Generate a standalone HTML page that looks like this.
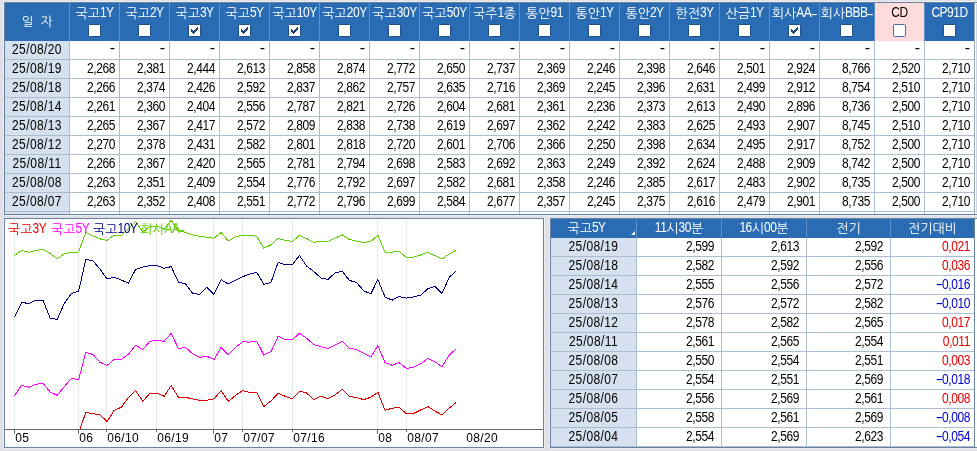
<!DOCTYPE html>
<html lang="ko"><head><meta charset="utf-8"><title>금리</title>
<style>
html,body{margin:0;padding:0}
body{width:977px;height:451px;overflow:hidden;position:relative;background:#dfe1e6;font-family:"Liberation Sans","NanumGothic",sans-serif;font-size:12px;color:#000}
div,span{position:absolute;box-sizing:border-box;white-space:nowrap}
span.i{position:static}
.pnl{background:#fff;border:1px solid #69829f;box-shadow:0 0 0 1px #eceef1;overflow:hidden}
.pnl.lo{box-shadow:1px 0 0 #eceef1,-1px 0 0 #eceef1,0 1px 0 #eceef1}
.hd{background:#2a6cb4}
.c1{background:#d5e1ee}
.vl{width:1px;background:#a9bdd3}
.hl{height:1px;background:#a9bdd3}
.vh{width:1px;background:#5e90c9}
.n{height:18px;line-height:17px;text-align:right;letter-spacing:-0.4px;font-size:12px;transform-origin:50% 12.7px;transform:translateY(1.4px) scaleY(1.15)}
.d{height:18px;line-height:17px;text-align:center;letter-spacing:0.4px;font-size:12px;transform-origin:50% 12.7px;transform:translateY(1.4px) scaleY(1.15)}
.h{color:#fff;text-align:center;height:16px;line-height:16px}
.k{font-size:13px;letter-spacing:0px}
.l{font-size:12px;letter-spacing:-0.5px;display:inline-block;transform-origin:50% 78%;transform:translateY(-0.8px) scaleY(1.19)}
.hy{display:inline-block;width:6px;text-align:center;transform:scaleX(1.8);font-size:12px}
.cb{width:13px;height:13px;background:#fff;border:1px solid #1d4f87;border-radius:1.5px}
.lg{height:16px;line-height:16px}
.ax{height:14px;line-height:14px;letter-spacing:0.35px;font-size:12px;transform-origin:0 11px;transform:scaleY(1.1)}
svg{position:absolute;left:0;top:0}

</style></head><body><div id="root" style="left:0;top:0;width:977px;height:451px;will-change:transform">
<div class="pnl" style="left:4px;top:2px;width:990px;height:213px"></div>
<div class="hd" style="left:5px;top:3px;width:969px;height:38px"></div>
<div style="left:875px;top:3px;width:49px;height:38px;background:#ffdcdc"></div>
<div class="c1" style="left:5px;top:41px;width:64px;height:173px"></div>
<div class="vh" style="left:69px;top:3px;height:38px"></div>
<div class="vh" style="left:119px;top:3px;height:38px"></div>
<div class="vh" style="left:169px;top:3px;height:38px"></div>
<div class="vh" style="left:219px;top:3px;height:38px"></div>
<div class="vh" style="left:269px;top:3px;height:38px"></div>
<div class="vh" style="left:319px;top:3px;height:38px"></div>
<div class="vh" style="left:369px;top:3px;height:38px"></div>
<div class="vh" style="left:419px;top:3px;height:38px"></div>
<div class="vh" style="left:469px;top:3px;height:38px"></div>
<div class="vh" style="left:519px;top:3px;height:38px"></div>
<div class="vh" style="left:569px;top:3px;height:38px"></div>
<div class="vh" style="left:619px;top:3px;height:38px"></div>
<div class="vh" style="left:669px;top:3px;height:38px"></div>
<div class="vh" style="left:719px;top:3px;height:38px"></div>
<div class="vh" style="left:769px;top:3px;height:38px"></div>
<div class="vh" style="left:819px;top:3px;height:38px"></div>
<div class="vh" style="left:874px;top:3px;height:38px"></div>
<div class="vh" style="left:924px;top:3px;height:38px"></div>
<div class="vl" style="left:69px;top:41px;height:173px"></div>
<div class="vl" style="left:119px;top:41px;height:173px"></div>
<div class="vl" style="left:169px;top:41px;height:173px"></div>
<div class="vl" style="left:219px;top:41px;height:173px"></div>
<div class="vl" style="left:269px;top:41px;height:173px"></div>
<div class="vl" style="left:319px;top:41px;height:173px"></div>
<div class="vl" style="left:369px;top:41px;height:173px"></div>
<div class="vl" style="left:419px;top:41px;height:173px"></div>
<div class="vl" style="left:469px;top:41px;height:173px"></div>
<div class="vl" style="left:519px;top:41px;height:173px"></div>
<div class="vl" style="left:569px;top:41px;height:173px"></div>
<div class="vl" style="left:619px;top:41px;height:173px"></div>
<div class="vl" style="left:669px;top:41px;height:173px"></div>
<div class="vl" style="left:719px;top:41px;height:173px"></div>
<div class="vl" style="left:769px;top:41px;height:173px"></div>
<div class="vl" style="left:819px;top:41px;height:173px"></div>
<div class="vl" style="left:874px;top:41px;height:173px"></div>
<div class="vl" style="left:924px;top:41px;height:173px"></div>
<div style="left:974px;top:3px;width:1px;height:211px;background:#9aa6b6"></div>
<div style="left:975px;top:3px;width:2px;height:211px;background:#fff"></div>
<div style="left:976px;top:4px;width:1px;height:209px;background:#ccd5e2"></div>
<div class="hl" style="left:5px;top:59px;width:969px"></div>
<div class="hl" style="left:5px;top:78px;width:969px"></div>
<div class="hl" style="left:5px;top:97px;width:969px"></div>
<div class="hl" style="left:5px;top:116px;width:969px"></div>
<div class="hl" style="left:5px;top:135px;width:969px"></div>
<div class="hl" style="left:5px;top:154px;width:969px"></div>
<div class="hl" style="left:5px;top:173px;width:969px"></div>
<div class="hl" style="left:5px;top:192px;width:969px"></div>
<div class="hl" style="left:5px;top:211px;width:969px"></div>
<div class="h" style="left:5px;top:13.5px;width:64px;word-spacing:3.5px"><span class="i k" style="font-size:12.5px">일 자</span></div>
<div class="h" style="left:67px;top:5.5px;width:55px;color:#fff"><span class="i k">국고</span><span class="i l">1Y</span></div>
<div class="cb" style="left:88px;top:24px;border-color:#1d4f87"></div>
<div class="h" style="left:117px;top:5.5px;width:55px;color:#fff"><span class="i k">국고</span><span class="i l">2Y</span></div>
<div class="cb" style="left:138px;top:24px;border-color:#1d4f87"></div>
<div class="h" style="left:167px;top:5.5px;width:55px;color:#fff"><span class="i k">국고</span><span class="i l">3Y</span></div>
<div class="cb" style="left:188px;top:24px;border-color:#1d4f87"></div>
<svg style="left:188px;top:24px" width="13" height="13" viewBox="0 0 13 13" shape-rendering="crispEdges"><path d="M3 5h1v3h-1zM4 6h1v3h-1zM5 7h1v3h-1zM6 6h1v3h-1zM7 5h1v3h-1zM8 4h1v3h-1zM9 3h1v3h-1z" fill="#1b4278"/></svg>
<div class="h" style="left:217px;top:5.5px;width:55px;color:#fff"><span class="i k">국고</span><span class="i l">5Y</span></div>
<div class="cb" style="left:238px;top:24px;border-color:#1d4f87"></div>
<svg style="left:238px;top:24px" width="13" height="13" viewBox="0 0 13 13" shape-rendering="crispEdges"><path d="M3 5h1v3h-1zM4 6h1v3h-1zM5 7h1v3h-1zM6 6h1v3h-1zM7 5h1v3h-1zM8 4h1v3h-1zM9 3h1v3h-1z" fill="#1b4278"/></svg>
<div class="h" style="left:267px;top:5.5px;width:55px;color:#fff"><span class="i k">국고</span><span class="i l">10Y</span></div>
<div class="cb" style="left:288px;top:24px;border-color:#1d4f87"></div>
<svg style="left:288px;top:24px" width="13" height="13" viewBox="0 0 13 13" shape-rendering="crispEdges"><path d="M3 5h1v3h-1zM4 6h1v3h-1zM5 7h1v3h-1zM6 6h1v3h-1zM7 5h1v3h-1zM8 4h1v3h-1zM9 3h1v3h-1z" fill="#1b4278"/></svg>
<div class="h" style="left:317px;top:5.5px;width:55px;color:#fff"><span class="i k">국고</span><span class="i l">20Y</span></div>
<div class="cb" style="left:338px;top:24px;border-color:#1d4f87"></div>
<div class="h" style="left:367px;top:5.5px;width:55px;color:#fff"><span class="i k">국고</span><span class="i l">30Y</span></div>
<div class="cb" style="left:388px;top:24px;border-color:#1d4f87"></div>
<div class="h" style="left:417px;top:5.5px;width:55px;color:#fff"><span class="i k">국고</span><span class="i l">50Y</span></div>
<div class="cb" style="left:438px;top:24px;border-color:#1d4f87"></div>
<div class="h" style="left:467px;top:5.5px;width:55px;color:#fff"><span class="i k">국주</span><span class="i l">1</span><span class="i k">종</span></div>
<div class="cb" style="left:488px;top:24px;border-color:#1d4f87"></div>
<div class="h" style="left:517px;top:5.5px;width:55px;color:#fff"><span class="i k">통안</span><span class="i l">91</span></div>
<div class="cb" style="left:538px;top:24px;border-color:#1d4f87"></div>
<div class="h" style="left:567px;top:5.5px;width:55px;color:#fff"><span class="i k">통안</span><span class="i l">1Y</span></div>
<div class="cb" style="left:588px;top:24px;border-color:#1d4f87"></div>
<div class="h" style="left:617px;top:5.5px;width:55px;color:#fff"><span class="i k">통안</span><span class="i l">2Y</span></div>
<div class="cb" style="left:638px;top:24px;border-color:#1d4f87"></div>
<div class="h" style="left:667px;top:5.5px;width:55px;color:#fff"><span class="i k">한전</span><span class="i l">3Y</span></div>
<div class="cb" style="left:688px;top:24px;border-color:#1d4f87"></div>
<div class="h" style="left:717px;top:5.5px;width:55px;color:#fff"><span class="i k">산금</span><span class="i l">1Y</span></div>
<div class="cb" style="left:738px;top:24px;border-color:#1d4f87"></div>
<div class="h" style="left:767px;top:5.5px;width:55px;color:#fff"><span class="i k">회사</span><span class="i l">AA</span><span class="i hy">-</span></div>
<div class="cb" style="left:788px;top:24px;border-color:#1d4f87"></div>
<svg style="left:788px;top:24px" width="13" height="13" viewBox="0 0 13 13" shape-rendering="crispEdges"><path d="M3 5h1v3h-1zM4 6h1v3h-1zM5 7h1v3h-1zM6 6h1v3h-1zM7 5h1v3h-1zM8 4h1v3h-1zM9 3h1v3h-1z" fill="#1b4278"/></svg>
<div class="h" style="left:817px;top:5.5px;width:60px;color:#fff"><span class="i k">회사</span><span class="i l">BBB</span><span class="i hy">-</span></div>
<div class="cb" style="left:840px;top:24px;border-color:#1d4f87"></div>
<div class="h" style="left:872px;top:5.5px;width:55px;color:#000"><span class="i l">CD</span></div>
<div class="cb" style="left:893px;top:24px;border-color:#3d6ea8"></div>
<div class="h" style="left:922px;top:5.5px;width:55px;color:#fff"><span class="i l">CP91D</span></div>
<div class="cb" style="left:943px;top:24px;border-color:#1d4f87"></div>
<div class="d" style="left:5px;top:41px;width:64px">25/08/20</div>
<div class="n" style="left:70px;top:41px;width:45px;letter-spacing:0;font-size:16px;line-height:14.8px;transform:none">-</div>
<div class="n" style="left:120px;top:41px;width:45px;letter-spacing:0;font-size:16px;line-height:14.8px;transform:none">-</div>
<div class="n" style="left:170px;top:41px;width:45px;letter-spacing:0;font-size:16px;line-height:14.8px;transform:none">-</div>
<div class="n" style="left:220px;top:41px;width:45px;letter-spacing:0;font-size:16px;line-height:14.8px;transform:none">-</div>
<div class="n" style="left:270px;top:41px;width:45px;letter-spacing:0;font-size:16px;line-height:14.8px;transform:none">-</div>
<div class="n" style="left:320px;top:41px;width:45px;letter-spacing:0;font-size:16px;line-height:14.8px;transform:none">-</div>
<div class="n" style="left:370px;top:41px;width:45px;letter-spacing:0;font-size:16px;line-height:14.8px;transform:none">-</div>
<div class="n" style="left:420px;top:41px;width:45px;letter-spacing:0;font-size:16px;line-height:14.8px;transform:none">-</div>
<div class="n" style="left:470px;top:41px;width:45px;letter-spacing:0;font-size:16px;line-height:14.8px;transform:none">-</div>
<div class="n" style="left:520px;top:41px;width:45px;letter-spacing:0;font-size:16px;line-height:14.8px;transform:none">-</div>
<div class="n" style="left:570px;top:41px;width:45px;letter-spacing:0;font-size:16px;line-height:14.8px;transform:none">-</div>
<div class="n" style="left:620px;top:41px;width:45px;letter-spacing:0;font-size:16px;line-height:14.8px;transform:none">-</div>
<div class="n" style="left:670px;top:41px;width:45px;letter-spacing:0;font-size:16px;line-height:14.8px;transform:none">-</div>
<div class="n" style="left:720px;top:41px;width:45px;letter-spacing:0;font-size:16px;line-height:14.8px;transform:none">-</div>
<div class="n" style="left:770px;top:41px;width:45px;letter-spacing:0;font-size:16px;line-height:14.8px;transform:none">-</div>
<div class="n" style="left:820px;top:41px;width:50px;letter-spacing:0;font-size:16px;line-height:14.8px;transform:none">-</div>
<div class="n" style="left:875px;top:41px;width:45px;letter-spacing:0;font-size:16px;line-height:14.8px;transform:none">-</div>
<div class="n" style="left:925px;top:41px;width:45px;letter-spacing:0;font-size:16px;line-height:14.8px;transform:none">-</div>
<div class="d" style="left:5px;top:60px;width:64px">25/08/19</div>
<div class="n" style="left:70px;top:60px;width:45px">2,268</div>
<div class="n" style="left:120px;top:60px;width:45px">2,381</div>
<div class="n" style="left:170px;top:60px;width:45px">2,444</div>
<div class="n" style="left:220px;top:60px;width:45px">2,613</div>
<div class="n" style="left:270px;top:60px;width:45px">2,858</div>
<div class="n" style="left:320px;top:60px;width:45px">2,874</div>
<div class="n" style="left:370px;top:60px;width:45px">2,772</div>
<div class="n" style="left:420px;top:60px;width:45px">2,650</div>
<div class="n" style="left:470px;top:60px;width:45px">2,737</div>
<div class="n" style="left:520px;top:60px;width:45px">2,369</div>
<div class="n" style="left:570px;top:60px;width:45px">2,246</div>
<div class="n" style="left:620px;top:60px;width:45px">2,398</div>
<div class="n" style="left:670px;top:60px;width:45px">2,646</div>
<div class="n" style="left:720px;top:60px;width:45px">2,501</div>
<div class="n" style="left:770px;top:60px;width:45px">2,924</div>
<div class="n" style="left:820px;top:60px;width:50px">8,766</div>
<div class="n" style="left:875px;top:60px;width:45px">2,520</div>
<div class="n" style="left:925px;top:60px;width:45px">2,710</div>
<div class="d" style="left:5px;top:79px;width:64px">25/08/18</div>
<div class="n" style="left:70px;top:79px;width:45px">2,266</div>
<div class="n" style="left:120px;top:79px;width:45px">2,374</div>
<div class="n" style="left:170px;top:79px;width:45px">2,426</div>
<div class="n" style="left:220px;top:79px;width:45px">2,592</div>
<div class="n" style="left:270px;top:79px;width:45px">2,837</div>
<div class="n" style="left:320px;top:79px;width:45px">2,862</div>
<div class="n" style="left:370px;top:79px;width:45px">2,757</div>
<div class="n" style="left:420px;top:79px;width:45px">2,635</div>
<div class="n" style="left:470px;top:79px;width:45px">2,716</div>
<div class="n" style="left:520px;top:79px;width:45px">2,369</div>
<div class="n" style="left:570px;top:79px;width:45px">2,245</div>
<div class="n" style="left:620px;top:79px;width:45px">2,396</div>
<div class="n" style="left:670px;top:79px;width:45px">2,631</div>
<div class="n" style="left:720px;top:79px;width:45px">2,499</div>
<div class="n" style="left:770px;top:79px;width:45px">2,912</div>
<div class="n" style="left:820px;top:79px;width:50px">8,754</div>
<div class="n" style="left:875px;top:79px;width:45px">2,510</div>
<div class="n" style="left:925px;top:79px;width:45px">2,710</div>
<div class="d" style="left:5px;top:98px;width:64px">25/08/14</div>
<div class="n" style="left:70px;top:98px;width:45px">2,261</div>
<div class="n" style="left:120px;top:98px;width:45px">2,360</div>
<div class="n" style="left:170px;top:98px;width:45px">2,404</div>
<div class="n" style="left:220px;top:98px;width:45px">2,556</div>
<div class="n" style="left:270px;top:98px;width:45px">2,787</div>
<div class="n" style="left:320px;top:98px;width:45px">2,821</div>
<div class="n" style="left:370px;top:98px;width:45px">2,726</div>
<div class="n" style="left:420px;top:98px;width:45px">2,604</div>
<div class="n" style="left:470px;top:98px;width:45px">2,681</div>
<div class="n" style="left:520px;top:98px;width:45px">2,361</div>
<div class="n" style="left:570px;top:98px;width:45px">2,236</div>
<div class="n" style="left:620px;top:98px;width:45px">2,373</div>
<div class="n" style="left:670px;top:98px;width:45px">2,613</div>
<div class="n" style="left:720px;top:98px;width:45px">2,490</div>
<div class="n" style="left:770px;top:98px;width:45px">2,896</div>
<div class="n" style="left:820px;top:98px;width:50px">8,736</div>
<div class="n" style="left:875px;top:98px;width:45px">2,500</div>
<div class="n" style="left:925px;top:98px;width:45px">2,710</div>
<div class="d" style="left:5px;top:117px;width:64px">25/08/13</div>
<div class="n" style="left:70px;top:117px;width:45px">2,265</div>
<div class="n" style="left:120px;top:117px;width:45px">2,367</div>
<div class="n" style="left:170px;top:117px;width:45px">2,417</div>
<div class="n" style="left:220px;top:117px;width:45px">2,572</div>
<div class="n" style="left:270px;top:117px;width:45px">2,809</div>
<div class="n" style="left:320px;top:117px;width:45px">2,838</div>
<div class="n" style="left:370px;top:117px;width:45px">2,738</div>
<div class="n" style="left:420px;top:117px;width:45px">2,619</div>
<div class="n" style="left:470px;top:117px;width:45px">2,697</div>
<div class="n" style="left:520px;top:117px;width:45px">2,362</div>
<div class="n" style="left:570px;top:117px;width:45px">2,242</div>
<div class="n" style="left:620px;top:117px;width:45px">2,383</div>
<div class="n" style="left:670px;top:117px;width:45px">2,625</div>
<div class="n" style="left:720px;top:117px;width:45px">2,493</div>
<div class="n" style="left:770px;top:117px;width:45px">2,907</div>
<div class="n" style="left:820px;top:117px;width:50px">8,745</div>
<div class="n" style="left:875px;top:117px;width:45px">2,510</div>
<div class="n" style="left:925px;top:117px;width:45px">2,710</div>
<div class="d" style="left:5px;top:136px;width:64px">25/08/12</div>
<div class="n" style="left:70px;top:136px;width:45px">2,270</div>
<div class="n" style="left:120px;top:136px;width:45px">2,378</div>
<div class="n" style="left:170px;top:136px;width:45px">2,431</div>
<div class="n" style="left:220px;top:136px;width:45px">2,582</div>
<div class="n" style="left:270px;top:136px;width:45px">2,801</div>
<div class="n" style="left:320px;top:136px;width:45px">2,818</div>
<div class="n" style="left:370px;top:136px;width:45px">2,720</div>
<div class="n" style="left:420px;top:136px;width:45px">2,601</div>
<div class="n" style="left:470px;top:136px;width:45px">2,706</div>
<div class="n" style="left:520px;top:136px;width:45px">2,366</div>
<div class="n" style="left:570px;top:136px;width:45px">2,250</div>
<div class="n" style="left:620px;top:136px;width:45px">2,398</div>
<div class="n" style="left:670px;top:136px;width:45px">2,634</div>
<div class="n" style="left:720px;top:136px;width:45px">2,495</div>
<div class="n" style="left:770px;top:136px;width:45px">2,917</div>
<div class="n" style="left:820px;top:136px;width:50px">8,752</div>
<div class="n" style="left:875px;top:136px;width:45px">2,500</div>
<div class="n" style="left:925px;top:136px;width:45px">2,710</div>
<div class="d" style="left:5px;top:155px;width:64px">25/08/11</div>
<div class="n" style="left:70px;top:155px;width:45px">2,266</div>
<div class="n" style="left:120px;top:155px;width:45px">2,367</div>
<div class="n" style="left:170px;top:155px;width:45px">2,420</div>
<div class="n" style="left:220px;top:155px;width:45px">2,565</div>
<div class="n" style="left:270px;top:155px;width:45px">2,781</div>
<div class="n" style="left:320px;top:155px;width:45px">2,794</div>
<div class="n" style="left:370px;top:155px;width:45px">2,698</div>
<div class="n" style="left:420px;top:155px;width:45px">2,583</div>
<div class="n" style="left:470px;top:155px;width:45px">2,692</div>
<div class="n" style="left:520px;top:155px;width:45px">2,363</div>
<div class="n" style="left:570px;top:155px;width:45px">2,249</div>
<div class="n" style="left:620px;top:155px;width:45px">2,392</div>
<div class="n" style="left:670px;top:155px;width:45px">2,624</div>
<div class="n" style="left:720px;top:155px;width:45px">2,488</div>
<div class="n" style="left:770px;top:155px;width:45px">2,909</div>
<div class="n" style="left:820px;top:155px;width:50px">8,742</div>
<div class="n" style="left:875px;top:155px;width:45px">2,500</div>
<div class="n" style="left:925px;top:155px;width:45px">2,710</div>
<div class="d" style="left:5px;top:174px;width:64px">25/08/08</div>
<div class="n" style="left:70px;top:174px;width:45px">2,263</div>
<div class="n" style="left:120px;top:174px;width:45px">2,351</div>
<div class="n" style="left:170px;top:174px;width:45px">2,409</div>
<div class="n" style="left:220px;top:174px;width:45px">2,554</div>
<div class="n" style="left:270px;top:174px;width:45px">2,776</div>
<div class="n" style="left:320px;top:174px;width:45px">2,792</div>
<div class="n" style="left:370px;top:174px;width:45px">2,697</div>
<div class="n" style="left:420px;top:174px;width:45px">2,582</div>
<div class="n" style="left:470px;top:174px;width:45px">2,681</div>
<div class="n" style="left:520px;top:174px;width:45px">2,358</div>
<div class="n" style="left:570px;top:174px;width:45px">2,246</div>
<div class="n" style="left:620px;top:174px;width:45px">2,385</div>
<div class="n" style="left:670px;top:174px;width:45px">2,617</div>
<div class="n" style="left:720px;top:174px;width:45px">2,483</div>
<div class="n" style="left:770px;top:174px;width:45px">2,902</div>
<div class="n" style="left:820px;top:174px;width:50px">8,735</div>
<div class="n" style="left:875px;top:174px;width:45px">2,500</div>
<div class="n" style="left:925px;top:174px;width:45px">2,710</div>
<div class="d" style="left:5px;top:193px;width:64px">25/08/07</div>
<div class="n" style="left:70px;top:193px;width:45px">2,263</div>
<div class="n" style="left:120px;top:193px;width:45px">2,352</div>
<div class="n" style="left:170px;top:193px;width:45px">2,408</div>
<div class="n" style="left:220px;top:193px;width:45px">2,551</div>
<div class="n" style="left:270px;top:193px;width:45px">2,772</div>
<div class="n" style="left:320px;top:193px;width:45px">2,796</div>
<div class="n" style="left:370px;top:193px;width:45px">2,699</div>
<div class="n" style="left:420px;top:193px;width:45px">2,584</div>
<div class="n" style="left:470px;top:193px;width:45px">2,677</div>
<div class="n" style="left:520px;top:193px;width:45px">2,357</div>
<div class="n" style="left:570px;top:193px;width:45px">2,245</div>
<div class="n" style="left:620px;top:193px;width:45px">2,375</div>
<div class="n" style="left:670px;top:193px;width:45px">2,616</div>
<div class="n" style="left:720px;top:193px;width:45px">2,479</div>
<div class="n" style="left:770px;top:193px;width:45px">2,901</div>
<div class="n" style="left:820px;top:193px;width:50px">8,735</div>
<div class="n" style="left:875px;top:193px;width:45px">2,500</div>
<div class="n" style="left:925px;top:193px;width:45px">2,710</div>
<div class="pnl lo" style="left:4px;top:218px;width:540px;height:230px"></div>
<div style="left:14px;top:219px;width:1px;height:210px;background:#e9e9e9"></div>
<div style="left:78px;top:219px;width:1px;height:210px;background:#e9e9e9"></div>
<div style="left:106px;top:219px;width:1px;height:210px;background:#e9e9e9"></div>
<div style="left:156px;top:219px;width:1px;height:210px;background:#e9e9e9"></div>
<div style="left:213px;top:219px;width:1px;height:210px;background:#e9e9e9"></div>
<div style="left:242px;top:219px;width:1px;height:210px;background:#e9e9e9"></div>
<div style="left:292px;top:219px;width:1px;height:210px;background:#e9e9e9"></div>
<div style="left:377px;top:219px;width:1px;height:210px;background:#e9e9e9"></div>
<div style="left:406px;top:219px;width:1px;height:210px;background:#e9e9e9"></div>
<div style="left:5px;top:429px;width:538px;height:1px;background:#666"></div>
<div style="left:14px;top:430px;width:1px;height:4px;background:#666"></div>
<div style="left:78px;top:430px;width:1px;height:4px;background:#666"></div>
<div style="left:106px;top:430px;width:1px;height:2px;background:#666"></div>
<div style="left:156px;top:430px;width:1px;height:2px;background:#666"></div>
<div style="left:213px;top:430px;width:1px;height:4px;background:#666"></div>
<div style="left:242px;top:430px;width:1px;height:2px;background:#666"></div>
<div style="left:292px;top:430px;width:1px;height:2px;background:#666"></div>
<div style="left:377px;top:430px;width:1px;height:4px;background:#666"></div>
<div style="left:406px;top:430px;width:1px;height:2px;background:#666"></div>
<div class="ax" style="left:15.3px;top:431px">05</div>
<div class="ax" style="left:79.3px;top:431px">06</div>
<div class="ax" style="left:107.3px;top:431px">06/10</div>
<div class="ax" style="left:157.3px;top:431px">06/19</div>
<div class="ax" style="left:214.3px;top:431px">07</div>
<div class="ax" style="left:243.3px;top:431px">07/07</div>
<div class="ax" style="left:293.3px;top:431px">07/16</div>
<div class="ax" style="left:378.3px;top:431px">08</div>
<div class="ax" style="left:407.3px;top:431px">08/07</div>
<div class="ax" style="left:466.3px;top:431px">08/20</div>
<svg width="543" height="429" viewBox="0 0 543 429" shape-rendering="crispEdges" fill="none" stroke-width="1">
<polyline stroke="#60d000" points="14.5,255.5 21.6,250.5 28.8,252.3 35.9,250.5 43.0,249.3 50.1,253.4 57.2,258.8 64.4,253.7 71.5,252.4 78.6,252.0 85.8,232.5 92.9,235.8 100.0,238.9 107.1,240.4 114.2,235.0 121.4,235.4 128.5,228.6 135.6,221.2 142.8,232.3 149.9,226.2 157.0,226.2 164.1,229.3 171.2,220.1 178.4,231.2 185.5,232.3 192.6,235.0 199.8,236.4 206.9,237.3 214.0,238.2 221.1,232.4 228.2,241.1 235.4,236.8 242.5,235.1 249.6,235.1 256.8,236.4 263.9,248.2 271.0,244.8 278.1,238.4 285.2,240.4 292.4,241.4 299.5,235.3 306.6,238.6 313.8,242.3 320.9,241.4 328.0,241.4 335.1,238.1 342.2,234.9 349.4,239.5 356.5,241.1 363.6,242.5 370.8,241.3 377.9,235.3 385.0,252.1 392.1,252.1 399.2,251.4 406.4,257.5 413.5,257.2 420.6,255.0 427.8,252.4 434.9,255.6 442.0,259.1 449.1,254.0 456.2,250.0"/>
<polyline stroke="#000080" points="14.5,317.3 21.6,302.4 28.8,303.5 35.9,300.2 43.0,300.2 50.1,318.1 57.2,319.5 64.4,303.2 71.5,293.5 78.6,291.2 85.8,259.5 92.9,260.8 100.0,269.1 107.1,279.1 114.2,277.1 121.4,280.2 128.5,283.0 135.6,269.4 142.8,267.1 149.9,265.5 157.0,265.5 164.1,268.3 171.2,266.6 178.4,282.1 185.5,283.7 192.6,293.2 199.8,294.5 206.9,287.4 214.0,294.4 221.1,279.6 228.2,284.1 235.4,280.5 242.5,276.8 249.6,274.1 256.8,272.4 263.9,284.4 271.0,282.4 278.1,262.5 285.2,264.5 292.4,264.5 299.5,255.5 306.6,266.1 313.8,271.6 320.9,277.9 328.0,279.4 335.1,272.9 342.2,271.3 349.4,280.4 356.5,282.4 363.6,290.7 370.8,294.0 377.9,279.4 385.0,297.0 392.1,300.2 399.2,296.5 406.4,298.2 413.5,296.9 420.6,295.3 427.8,288.9 434.9,286.4 442.0,293.4 449.1,277.5 456.2,270.8"/>
<polyline stroke="#ff00ff" points="14.5,395.6 21.6,385.3 28.8,387.3 35.9,384.3 43.0,383.2 50.1,392.0 57.2,395.3 64.4,386.5 71.5,378.2 78.6,379.8 85.8,352.4 92.9,354.4 100.0,362.4 107.1,365.4 114.2,359.4 121.4,359.4 128.5,354.0 135.6,345.4 142.8,349.4 149.9,341.3 157.0,340.4 164.1,341.3 171.2,333.3 178.4,348.6 185.5,347.4 192.6,353.7 199.8,357.4 206.9,356.2 214.0,359.6 221.1,347.4 228.2,354.6 235.4,347.5 242.5,341.8 249.6,342.1 256.8,341.3 263.9,355.2 271.0,351.6 278.1,336.3 285.2,339.4 292.4,339.4 299.5,333.3 306.6,338.3 313.8,344.6 320.9,346.6 328.0,348.6 335.1,344.9 342.2,341.3 349.4,348.1 356.5,349.6 363.6,353.2 370.8,357.1 377.9,345.5 385.0,362.7 392.1,365.2 399.2,362.7 406.4,368.4 413.5,367.4 420.6,363.9 427.8,358.5 434.9,361.7 442.0,366.8 449.1,355.3 456.2,348.7"/>
<polyline stroke="#e00000" points="78.6,432.7 85.8,412.5 92.9,413.6 100.0,414.9 107.1,421.6 114.2,410.3 121.4,407.2 128.5,397.6 135.6,390.6 142.8,401.3 149.9,393.2 157.0,393.2 164.1,396.3 171.2,385.4 178.4,397.2 185.5,397.3 192.6,399.0 199.8,400.3 206.9,400.3 214.0,398.9 221.1,390.6 228.2,401.3 235.4,395.6 242.5,390.6 249.6,392.3 256.8,392.3 263.9,406.5 271.0,400.9 278.1,393.2 285.2,396.3 292.4,398.7 299.5,391.2 306.6,393.0 313.8,399.6 320.9,396.3 328.0,398.7 335.1,395.0 342.2,389.2 349.4,396.3 356.5,397.6 363.6,399.6 370.8,397.3 377.9,392.3 385.0,410.3 392.1,408.3 399.2,407.3 406.4,413.9 413.5,413.5 420.6,410.0 427.8,406.5 434.9,411.0 442.0,415.1 449.1,408.1 456.2,402.4"/>
</svg>
<div class="lg" style="left:8px;top:222px;color:#e00000"><span class="i k">국고</span><span class="i l">3Y</span></div>
<div class="lg" style="left:51px;top:222px;color:#ff00ff"><span class="i k">국고</span><span class="i l">5Y</span></div>
<div class="lg" style="left:93px;top:222px;color:#000080"><span class="i k">국고</span><span class="i l">10Y</span></div>
<div class="lg" style="left:140px;top:222px;color:#60d000"><span class="i k">회사</span><span class="i l">AA</span><span class="i hy">-</span></div>
<div class="pnl lo" style="left:550px;top:218px;width:440px;height:230px"></div>
<div class="hd" style="left:551px;top:219px;width:423px;height:19px"></div>
<div class="c1" style="left:551px;top:238px;width:85px;height:209px"></div>
<div class="vh" style="left:636px;top:219px;height:19px"></div>
<div class="vl" style="left:636px;top:238px;height:209px"></div>
<div class="vh" style="left:721px;top:219px;height:19px"></div>
<div class="vl" style="left:721px;top:238px;height:209px"></div>
<div class="vh" style="left:806px;top:219px;height:19px"></div>
<div class="vl" style="left:806px;top:238px;height:209px"></div>
<div class="vh" style="left:890px;top:219px;height:19px"></div>
<div class="vl" style="left:890px;top:238px;height:209px"></div>
<div style="left:974px;top:219px;width:1px;height:228px;background:#69829f"></div>
<div style="left:975px;top:219px;width:2px;height:228px;background:#fff"></div>
<div class="hl" style="left:551px;top:256px;width:423px"></div>
<div class="hl" style="left:551px;top:275px;width:423px"></div>
<div class="hl" style="left:551px;top:294px;width:423px"></div>
<div class="hl" style="left:551px;top:313px;width:423px"></div>
<div class="hl" style="left:551px;top:332px;width:423px"></div>
<div class="hl" style="left:551px;top:351px;width:423px"></div>
<div class="hl" style="left:551px;top:370px;width:423px"></div>
<div class="hl" style="left:551px;top:389px;width:423px"></div>
<div class="hl" style="left:551px;top:408px;width:423px"></div>
<div class="hl" style="left:551px;top:427px;width:423px"></div>
<div class="hl" style="left:551px;top:446px;width:423px"></div>
<div class="h" style="left:551px;top:220.7px;width:71px"><span class="i k">국고</span><span class="i l">5Y</span></div>
<svg style="left:629px;top:230px" width="7" height="7" viewBox="0 0 7 7"><path d="M6 1v4h-4z" fill="#fff"/></svg>
<div class="h" style="left:637px;top:220.7px;width:84px"><span class="i l">11</span><span class="i k">시</span><span class="i l">30</span><span class="i k">분</span></div>
<div class="h" style="left:722px;top:220.7px;width:84px"><span class="i l">16</span><span class="i k">시</span><span class="i l">00</span><span class="i k">분</span></div>
<div class="h" style="left:807px;top:220.7px;width:83px"><span class="i k">전기</span></div>
<div class="h" style="left:891px;top:220.7px;width:83px"><span class="i k">전기대비</span></div>
<div class="d" style="left:551px;top:238px;width:85px">25/08/19</div>
<div class="n" style="left:637px;top:238px;width:77px">2,599</div>
<div class="n" style="left:722px;top:238px;width:77px">2,613</div>
<div class="n" style="left:807px;top:238px;width:76px">2,592</div>
<div class="n" style="left:891px;top:238px;width:79px;color:#e00000">0,021</div>
<div class="d" style="left:551px;top:257px;width:85px">25/08/18</div>
<div class="n" style="left:637px;top:257px;width:77px">2,582</div>
<div class="n" style="left:722px;top:257px;width:77px">2,592</div>
<div class="n" style="left:807px;top:257px;width:76px">2,556</div>
<div class="n" style="left:891px;top:257px;width:79px;color:#e00000">0,036</div>
<div class="d" style="left:551px;top:276px;width:85px">25/08/14</div>
<div class="n" style="left:637px;top:276px;width:77px">2,555</div>
<div class="n" style="left:722px;top:276px;width:77px">2,556</div>
<div class="n" style="left:807px;top:276px;width:76px">2,572</div>
<div class="n" style="left:891px;top:276px;width:79px;color:#0000d0"><span class="i hy">-</span>0,016</div>
<div class="d" style="left:551px;top:295px;width:85px">25/08/13</div>
<div class="n" style="left:637px;top:295px;width:77px">2,576</div>
<div class="n" style="left:722px;top:295px;width:77px">2,572</div>
<div class="n" style="left:807px;top:295px;width:76px">2,582</div>
<div class="n" style="left:891px;top:295px;width:79px;color:#0000d0"><span class="i hy">-</span>0,010</div>
<div class="d" style="left:551px;top:314px;width:85px">25/08/12</div>
<div class="n" style="left:637px;top:314px;width:77px">2,578</div>
<div class="n" style="left:722px;top:314px;width:77px">2,582</div>
<div class="n" style="left:807px;top:314px;width:76px">2,565</div>
<div class="n" style="left:891px;top:314px;width:79px;color:#e00000">0,017</div>
<div class="d" style="left:551px;top:333px;width:85px">25/08/11</div>
<div class="n" style="left:637px;top:333px;width:77px">2,561</div>
<div class="n" style="left:722px;top:333px;width:77px">2,565</div>
<div class="n" style="left:807px;top:333px;width:76px">2,554</div>
<div class="n" style="left:891px;top:333px;width:79px;color:#e00000">0,011</div>
<div class="d" style="left:551px;top:352px;width:85px">25/08/08</div>
<div class="n" style="left:637px;top:352px;width:77px">2,550</div>
<div class="n" style="left:722px;top:352px;width:77px">2,554</div>
<div class="n" style="left:807px;top:352px;width:76px">2,551</div>
<div class="n" style="left:891px;top:352px;width:79px;color:#e00000">0,003</div>
<div class="d" style="left:551px;top:371px;width:85px">25/08/07</div>
<div class="n" style="left:637px;top:371px;width:77px">2,554</div>
<div class="n" style="left:722px;top:371px;width:77px">2,551</div>
<div class="n" style="left:807px;top:371px;width:76px">2,569</div>
<div class="n" style="left:891px;top:371px;width:79px;color:#0000d0"><span class="i hy">-</span>0,018</div>
<div class="d" style="left:551px;top:390px;width:85px">25/08/06</div>
<div class="n" style="left:637px;top:390px;width:77px">2,556</div>
<div class="n" style="left:722px;top:390px;width:77px">2,569</div>
<div class="n" style="left:807px;top:390px;width:76px">2,561</div>
<div class="n" style="left:891px;top:390px;width:79px;color:#e00000">0,008</div>
<div class="d" style="left:551px;top:409px;width:85px">25/08/05</div>
<div class="n" style="left:637px;top:409px;width:77px">2,558</div>
<div class="n" style="left:722px;top:409px;width:77px">2,561</div>
<div class="n" style="left:807px;top:409px;width:76px">2,569</div>
<div class="n" style="left:891px;top:409px;width:79px;color:#0000d0"><span class="i hy">-</span>0,008</div>
<div class="d" style="left:551px;top:428px;width:85px">25/08/04</div>
<div class="n" style="left:637px;top:428px;width:77px">2,554</div>
<div class="n" style="left:722px;top:428px;width:77px">2,569</div>
<div class="n" style="left:807px;top:428px;width:76px">2,623</div>
<div class="n" style="left:891px;top:428px;width:79px;color:#0000d0"><span class="i hy">-</span>0,054</div>
</div></body></html>
